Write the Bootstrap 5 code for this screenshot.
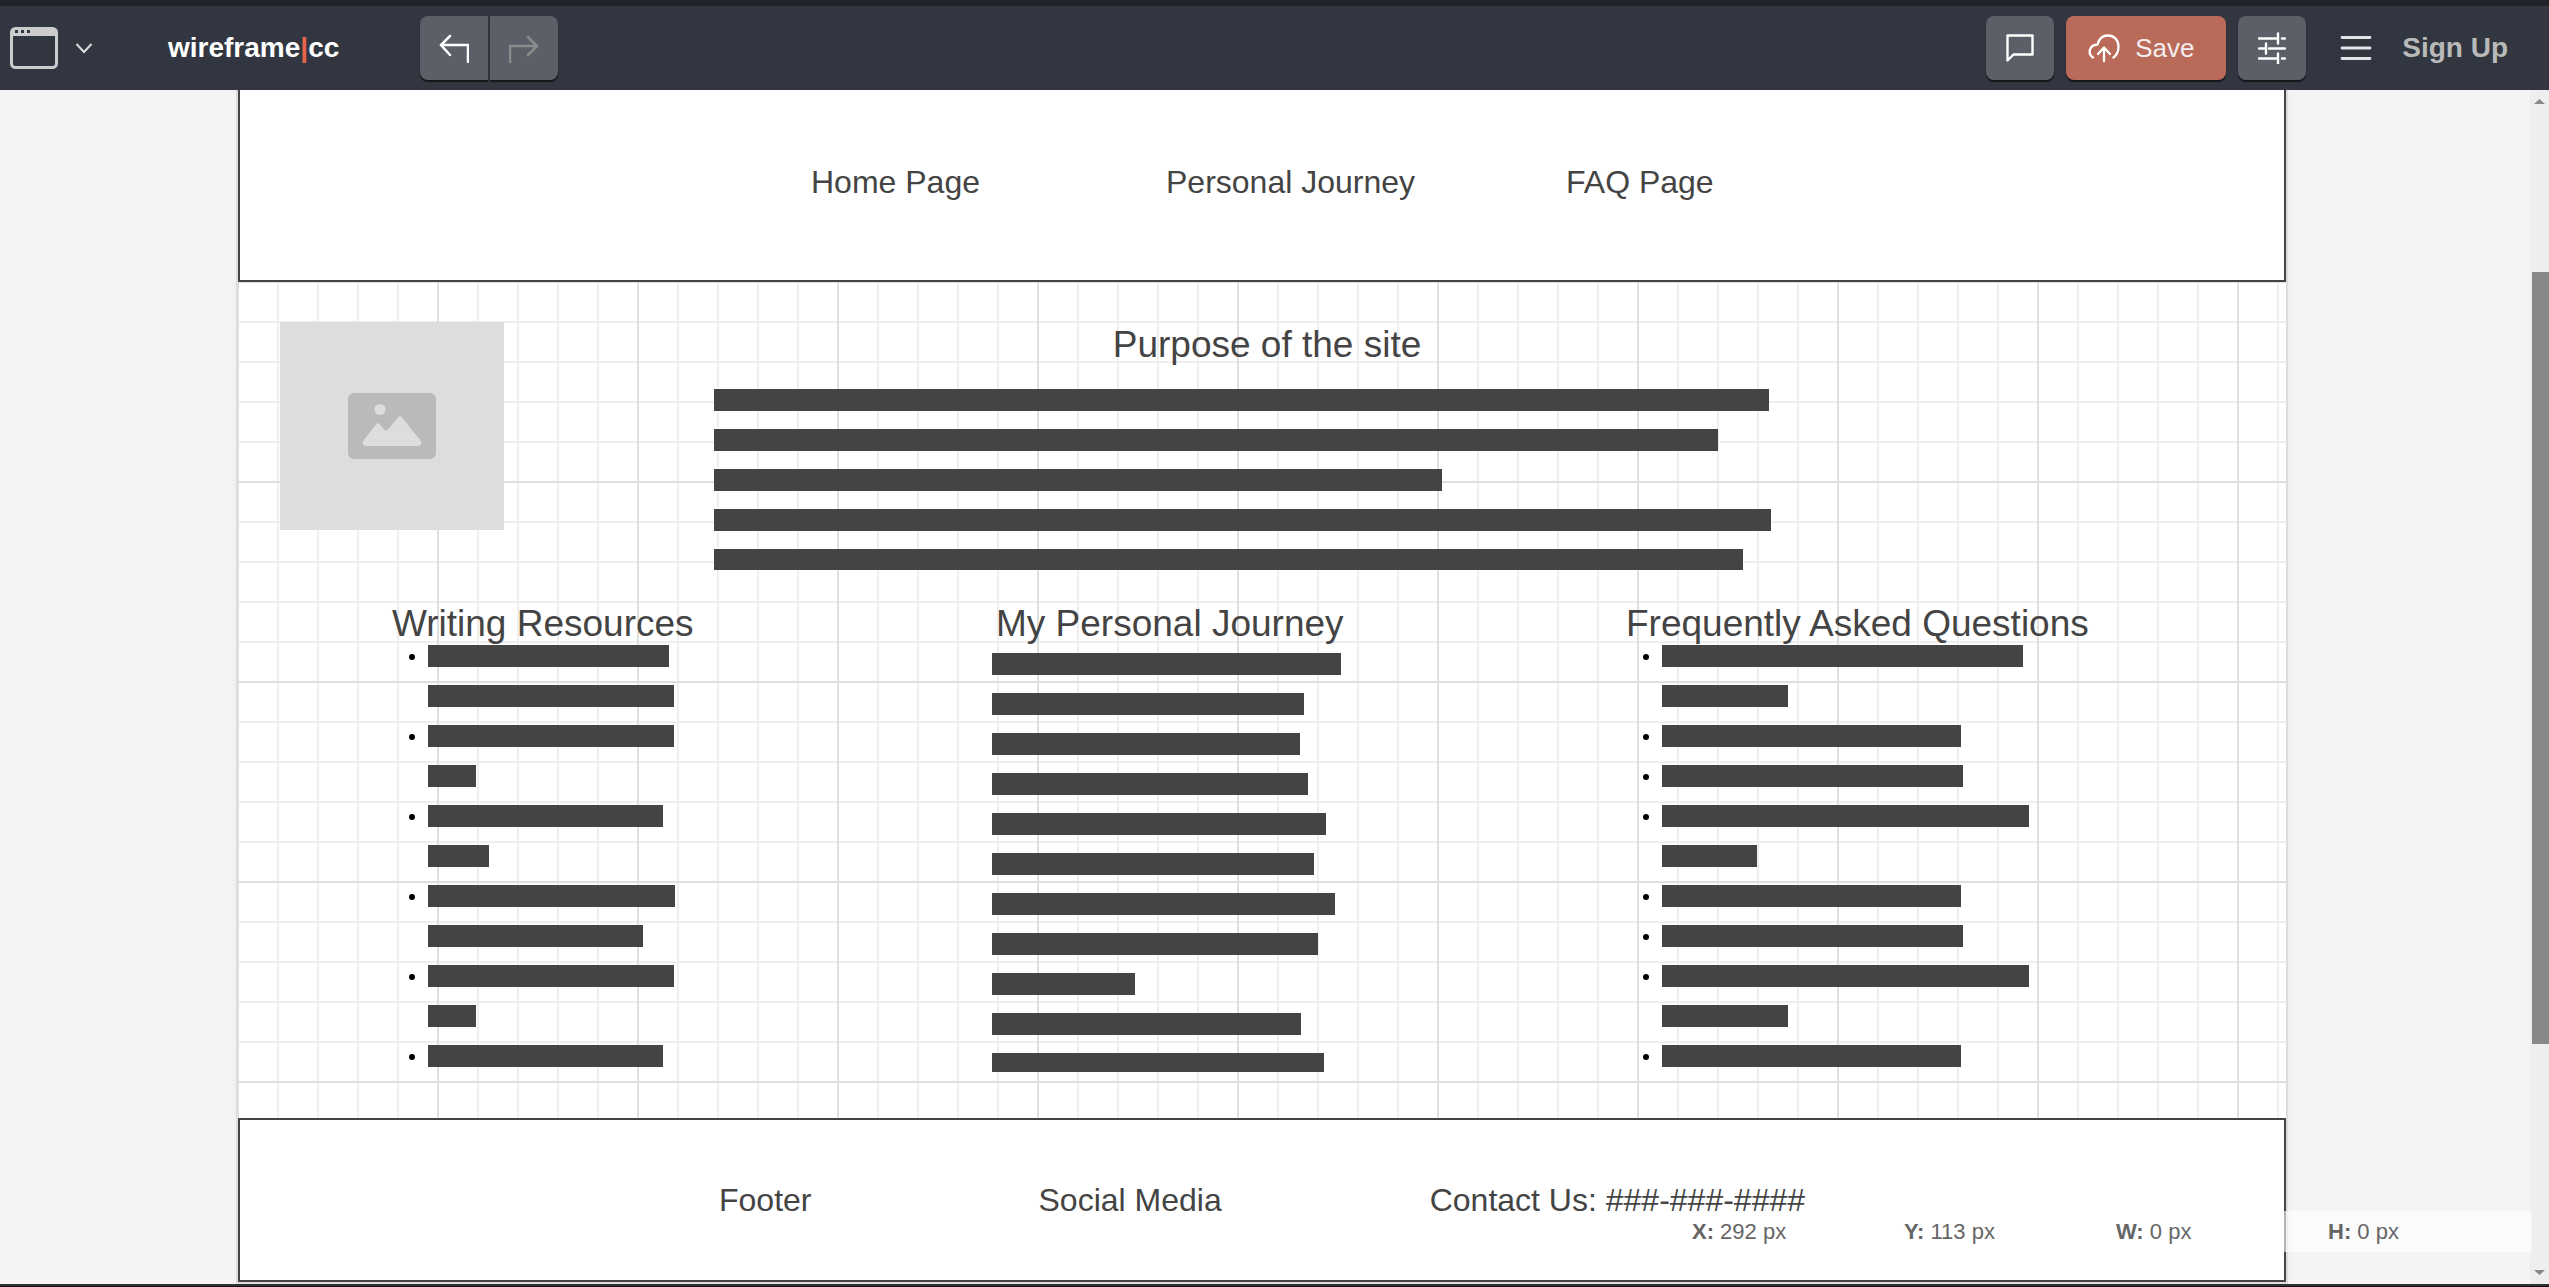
<!DOCTYPE html>
<html lang="en">
<head>
<meta charset="utf-8">
<meta name="viewport" content="width=device-width, initial-scale=1">
<title>wireframe|cc</title>
<link href="https://cdn.jsdelivr.net/npm/bootstrap@5.3.0/dist/css/bootstrap.min.css" rel="stylesheet">
<style>
  body { font-family: "Liberation Sans", Arial, sans-serif; background: #f4f4f4; color: #444; height: 100vh; }
  a { color: inherit; text-decoration: none; }
  svg { display: block; fill: none; }

  /* Toolbar */
  .toolbar { height: 90px; background: #323640; border-top: 6px solid #222328; padding: 0 41px 0 10px; }
  .toolbar button { border: 0; padding: 0; background: none; }
  .toolbar .tool { width: 68px; height: 64px; border-radius: 8px; background: #5b5f67; box-shadow: 0 2px 1px #15171b; }
  .toolbar .tool-undo { border-radius: 8px 0 0 8px; }
  .toolbar .tool-redo { border-radius: 0 8px 8px 0; margin-left: 2px; }
  .toolbar .tool-save { width: 160px; padding-left: 22px; margin: 0 12px; background: #b96a59; color: #f3eeee; font-size: 26px; gap: 15px; }
  .picker { gap: 17px; width: 158px; }
  .brand { font-size: 28px; font-weight: 700; color: #fff; width: 252px; }
  .brand span { color: #e8654c; }
  .menu-btn { margin: 0 30px 0 34px; }
  .signup { font-size: 28px; font-weight: 700; color: #b9b9b9; }

  /* Work area */
  .board { max-width: 2048px; box-shadow: 0 0 0 2px #ddd, 0 0 10px rgba(0,0,0,.05); background: #fff; margin-bottom: 2px; }
  .stage { padding-right: 6px; }
  .frame { border: 2px solid #444; background: #fff; font-size: 32px; line-height: 40px; }
  .frame-top { border-top: 0; padding: 72px 0 78px 571px; }
  .frame-bottom { padding: 60px 0 60px 479px; }
  .frame-top li + li { margin-left: 186px; }
  .frame-top li + li + li { margin-left: 151px; }
  .frame-bottom div + div { margin-left: 227px; }
  .frame-bottom div + div + div { margin-left: 208px; }
  .sheet {
    padding: 40px 42px 0;
    background-color: #fff;
    background-image:
      linear-gradient(90deg, #dfdfdf 2px, transparent 2px),
      linear-gradient(#dfdfdf 2px, transparent 2px),
      linear-gradient(90deg, #eee 2px, transparent 2px),
      linear-gradient(#eee 2px, transparent 2px);
    background-size: 200px 200px, 200px 200px, 40px 40px, 40px 40px;
    background-position: -1px -1px;
  }
  .photo { width: 224px; height: 208px; background: #ddd; }
  .purpose { width: 1106px; margin-left: 210px; padding-top: 1px; }
  .title { font-size: 37px; line-height: 43px; font-weight: 400; margin: 0; white-space: nowrap; }
  .purpose .title { margin-bottom: 23px; }
  .bars, .bars li { display: flex; flex-direction: column; gap: 18px; }
  .bars { list-style: none; margin: 0; padding: 0; }
  .bars span { display: block; height: 22px; background: #444; }
  .purpose .bars > :last-child { height: 21px; }
  .topics { margin-top: 32px; padding-left: 112px; }
  .topic-a { width: 600px; }
  .topic-b { width: 634px; }
  .topic-b .title { padding-left: 4px; }
  .topic-b .bars { margin-top: 8px; }
  .topic-b .bars > :last-child { height: 19px; }
  .dotted { padding-left: 36px; }
  .dotted li { position: relative; }
  .dotted li::before { content: ""; position: absolute; left: -19px; top: 9px; width: 6px; height: 6px; border-radius: 50%; background: #000; }

  .readout { position: absolute; right: 17px; bottom: 32px; height: 41px; line-height: 41px; font-size: 22px; color: #666; background: rgba(255,255,255,.6); }
  .readout div { width: 212px; padding-left: 8px; }
  .scroller { width: 19px; background: #eee; padding: 9px 2px 9px 2px; }
  .scroller .thumb { background: #888; height: 772px; margin: 168px -2px 0 0; }
  .edge { height: 3px; background: #333; border-bottom: 1px solid #111; }
</style>
<script src="https://cdn.jsdelivr.net/npm/bootstrap@5.3.0/dist/js/bootstrap.bundle.min.js"></script>
</head>
<body class="d-flex flex-column overflow-hidden m-0">

<header class="toolbar d-flex align-items-center flex-shrink-0">
  <button type="button" class="picker d-flex align-items-center" aria-label="Choose device">
    <svg width="48" height="42" viewBox="0 0 48 42"><rect x="1.500" y="1.500" width="45" height="39" rx="4" stroke="#ccc" stroke-width="3"/><path d="M1 9V5a4 4 0 0 1 4-4h38a4 4 0 0 1 4 4v4z" fill="#ccc"/><path d="M5 3h3v3H5zM11 3h3v3h-3zM17 3h3v3h-3z" fill="#323640"/></svg>
    <svg width="18" height="12" viewBox="0 0 18 12"><path d="M1.500 2l7.500 8 7.500-8" stroke="#ddd" stroke-width="2"/></svg>
  </button>
  <a href="#" class="brand">wireframe<span>|</span>cc</a>
  <button type="button" class="tool tool-undo d-flex align-items-center justify-content-center" aria-label="Undo">
    <svg width="30" height="30" viewBox="0 0 30 30"><path d="M11 3L2 12l9 10M2 12h27v17" stroke="#fff" stroke-width="2.500" stroke-linecap="round"/></svg>
  </button>
  <button type="button" class="tool tool-redo d-flex align-items-center justify-content-center" aria-label="Redo">
    <svg width="30" height="30" viewBox="0 0 30 30"><path d="M19 4l9 9-9 9M28 13H1v17" stroke="#8b8b8b" stroke-width="2.500" stroke-linecap="round"/></svg>
  </button>
  <button type="button" class="tool ms-auto d-flex align-items-center justify-content-center" aria-label="Comments">
    <svg width="28" height="28" viewBox="0 0 28 28"><path d="M1.500 1.500h25v19H7.500l-6 6z" stroke="#fff" stroke-width="2.400" stroke-linejoin="round"/></svg>
  </button>
  <button type="button" class="tool tool-save d-flex align-items-center">
    <svg width="32" height="28" viewBox="0 0 32 28"><path d="M5 23.500C-.5 20 .8 11 9.500 10.500 11 4.500 15 1.500 20 1.500c6 0 10.500 4.500 10.500 11 0 5-1.500 8.500-5 11M16 27V14.500M10 20l6-6.500 6 6.500" stroke="#fff" stroke-width="2.300" stroke-linecap="round" stroke-linejoin="round"/></svg>
    Save
  </button>
  <button type="button" class="tool d-flex align-items-center justify-content-center" aria-label="Settings">
    <svg width="28" height="32" viewBox="0 0 28 32"><path d="M1 6.500h18M24 6.500h3M20 1.500v10M1 16.500h7M11 16.500h16M8 11.500v10M1 26.500h18M24 26.500h3M20 21.500v10" stroke="#fff" stroke-width="2.400" stroke-linecap="round"/></svg>
  </button>
  <button type="button" class="menu-btn" aria-label="Menu">
    <svg width="32" height="26" viewBox="0 0 32 26"><path d="M2 2.500h28M2 13h28M2 23.500h28" stroke="#e4e4e8" stroke-width="2.800" stroke-linecap="round"/></svg>
  </button>
  <a href="#" class="signup">Sign Up</a>
</header>

<div class="d-flex flex-grow-1 position-relative overflow-hidden">
  <main class="stage d-flex flex-grow-1 justify-content-center">
    <div class="board w-100 d-flex flex-column">
      <nav class="frame frame-top">
        <ul class="list-unstyled d-flex m-0 text-nowrap">
          <li><a href="#">Home Page</a></li>
          <li><a href="#">Personal Journey</a></li>
          <li><a href="#">FAQ Page</a></li>
        </ul>
      </nav>

      <div class="sheet flex-grow-1">
        <section class="d-flex align-items-start">
          <div class="photo d-flex align-items-center justify-content-center">
            <svg width="88" height="66" viewBox="0 0 88 66" role="img" aria-label="Image placeholder"><rect width="88" height="66" rx="6" fill="#bababa"/><circle cx="32" cy="16.500" r="5.600" fill="#ddd"/><path d="M17.500 53q-4-1-2.300-5L28 31.500q2-2.500 4 0l4 5q2 2 4 0L50 24.500q2-2.500 4 0L72.500 47.500q2 4-1.500 5.500z" fill="#ddd"/></svg>
          </div>
          <div class="purpose">
            <h2 class="title text-center">Purpose of the site</h2>
            <div class="bars">
              <span style="width:1055px"></span><span style="width:1004px"></span><span style="width:728px"></span><span style="width:1057px"></span><span style="width:1029px"></span>
            </div>
          </div>
        </section>

        <div class="topics d-flex">
          <section class="topic-a">
            <h2 class="title">Writing Resources</h2>
            <ul class="bars dotted">
              <li><span style="width:241px"></span><span style="width:246px"></span></li>
              <li><span style="width:246px"></span><span style="width:48px"></span></li>
              <li><span style="width:235px"></span><span style="width:61px"></span></li>
              <li><span style="width:247px"></span><span style="width:215px"></span></li>
              <li><span style="width:246px"></span><span style="width:48px"></span></li>
              <li><span style="width:235px"></span></li>
            </ul>
          </section>
          <section class="topic-b">
            <h2 class="title">My Personal Journey</h2>
            <div class="bars">
              <span style="width:349px"></span><span style="width:312px"></span><span style="width:308px"></span><span style="width:316px"></span><span style="width:334px"></span><span style="width:322px"></span><span style="width:343px"></span><span style="width:326px"></span><span style="width:143px"></span><span style="width:309px"></span><span style="width:332px"></span>
            </div>
          </section>
          <section>
            <h2 class="title">Frequently Asked Questions</h2>
            <ul class="bars dotted">
              <li><span style="width:361px"></span><span style="width:126px"></span></li>
              <li><span style="width:299px"></span></li>
              <li><span style="width:301px"></span></li>
              <li><span style="width:367px"></span><span style="width:95px"></span></li>
              <li><span style="width:299px"></span></li>
              <li><span style="width:301px"></span></li>
              <li><span style="width:367px"></span><span style="width:126px"></span></li>
              <li><span style="width:299px"></span></li>
            </ul>
          </section>
        </div>
      </div>

      <footer class="frame frame-bottom d-flex text-nowrap">
        <div>Footer</div>
        <div>Social Media</div>
        <div>Contact Us: ###-###-####</div>
      </footer>
    </div>
  </main>

  <div class="scroller d-flex flex-column flex-shrink-0" aria-hidden="true">
    <svg class="mx-auto" width="11" height="5" viewBox="0 0 11 5"><path d="M0 5l5.500-5L11 5z" fill="#888"/></svg>
    <div class="thumb"></div>
    <svg class="mx-auto mt-auto" width="11" height="5" viewBox="0 0 11 5"><path d="M0 0l5.500 5L11 0z" fill="#888"/></svg>
  </div>

  <div class="readout d-flex text-nowrap">
    <div><b>X:</b> 292 px</div>
    <div><b>Y:</b> 113 px</div>
    <div><b>W:</b> 0 px</div>
    <div><b>H:</b> 0 px</div>
  </div>
</div>
<div class="edge flex-shrink-0"></div>
</body>
</html>
